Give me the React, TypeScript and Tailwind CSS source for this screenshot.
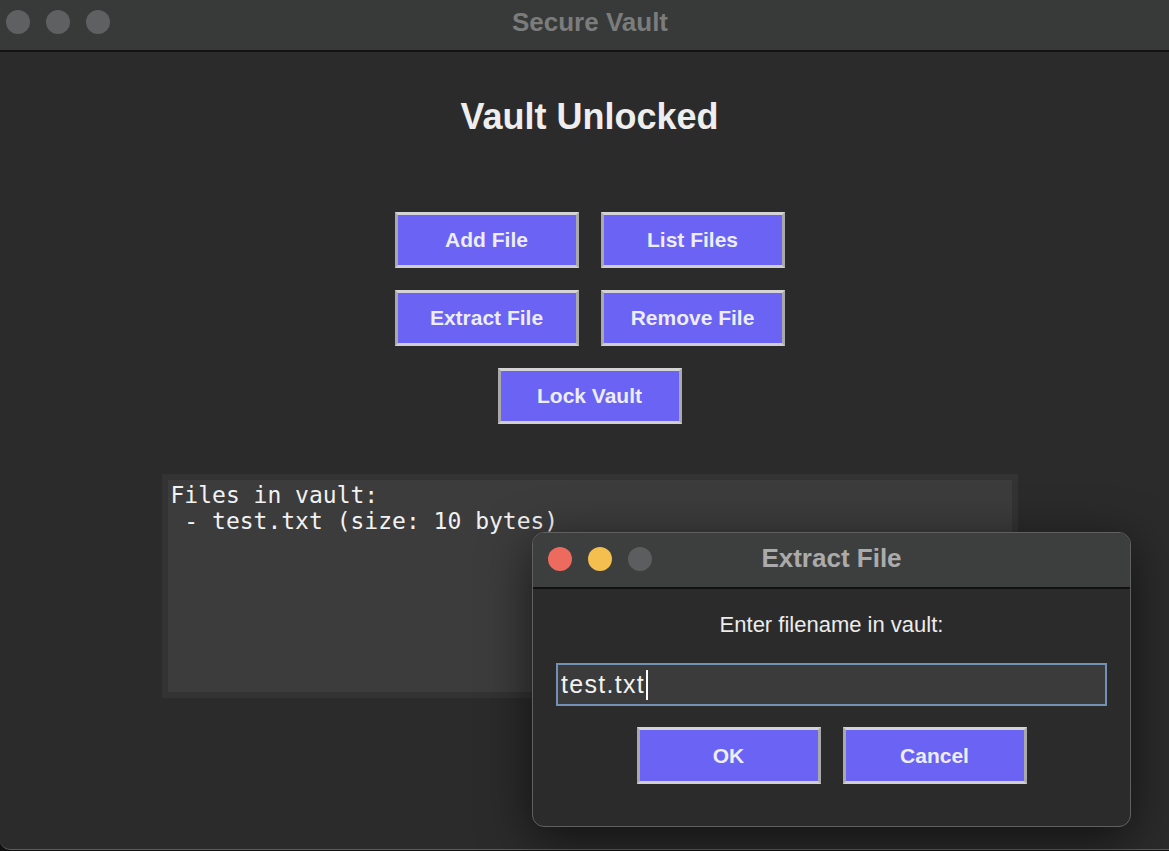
import React from "react";

const btn =
  "w-[184px] h-[56px] bg-[#6a63f4] text-[#ededf7] text-[21px] font-bold border-[3px] border-t-[#d4d4d4] border-l-[#a9a9a9] border-r-[#a9a9a9] border-b-[#cfcfcf] flex items-center justify-center";

function Lights({ colors, size }: { colors: string[]; size: string }) {
  return (
    <div className="flex gap-[16px]">
      {colors.map((c, i) => (
        <span key={i} className={`${size} rounded-full ${c}`} />
      ))}
    </div>
  );
}

export default function App() {
  return (
    <div
      className="relative w-[1169px] h-[851px] overflow-hidden bg-[#111111]"
      style={{ fontFamily: '"Liberation Sans", Arial, sans-serif' }}>
      <div className="h-[850px] flex flex-col bg-[#2b2b2b] rounded-bl-[10px] border-b border-[#5c5c5c]">
        {/* title bar */}
        <div className="relative h-[52px] bg-[#383a39] border-b-2 border-[#121212] flex items-center px-[6px] pb-[6px]">
          <Lights
            size="w-[24px] h-[24px]"
            colors={["bg-[#5f6061]", "bg-[#5f6061]", "bg-[#5f6061]"]}
          />
          <div className="absolute inset-0 flex items-center justify-center pl-[11px] pb-[6px] text-[26px] font-bold text-[#7b7c7c]">
            Secure Vault
          </div>
        </div>

        <main className="flex flex-col items-center pl-[10px]">
          <h1 className="mt-[45px] text-[36px] leading-[40px] font-bold text-[#eeeeee]">
            Vault Unlocked
          </h1>

          <div className="mt-[75px] grid grid-cols-2 gap-[22px]">
            <button className={btn}>Add File</button>
            <button className={btn}>List Files</button>
            <button className={btn}>Extract File</button>
            <button className={btn}>Remove File</button>
          </div>
          <button className={`${btn} mt-[22px]`}>Lock Vault</button>

          <div
            className="mt-[50px] w-[856px] h-[224px] border-[6px] border-[#333333] bg-[#3c3c3c] pl-[3px] pt-[2px] text-[23px] leading-[26px] text-[#f2f2f2] whitespace-pre"
            style={{ fontFamily: '"DejaVu Sans Mono", Menlo, monospace' }}>
            {"Files in vault:\n - test.txt (size: 10 bytes)"}
          </div>
        </main>
      </div>

      {/* dialog */}
      <div className="absolute left-[532px] top-[532px] w-[599px] h-[295px] rounded-[12px] border border-[#606060] bg-[#2b2b2b] overflow-hidden shadow-[0_12px_50px_rgba(0,0,0,0.6)] flex flex-col">
        <div className="relative h-[56px] bg-[#3d3f3e] border-b-2 border-[#111111] flex items-center px-[15px] pb-[2px]">
          <Lights
            size="w-[24px] h-[24px]"
            colors={["bg-[#ec6a5e]", "bg-[#f4bf4f]", "bg-[#5c5d5e]"]}
          />
          <div className="absolute inset-0 flex items-center justify-center pb-[4px] text-[26px] font-bold text-[#ababab]">
            Extract File
          </div>
        </div>
        <div className="flex flex-col items-center px-[23px]">
          <p className="mt-[23px] text-[22px] leading-[26px] text-[#ececec]">
            Enter filename in vault:
          </p>
          <div className="mt-[25px] w-full h-[43px] border-2 border-[#7191b6] bg-[#3b3b3b] flex items-center pl-[3px]">
            <span className="text-[25px] tracking-[1.3px] text-[#f2f2f2]">test.txt</span>
            <span className="ml-[1px] w-[2px] h-[30px] bg-white" />
          </div>
          <div className="mt-[21px] flex gap-[22px]">
            <button className={`${btn} h-[57px]`}>OK</button>
            <button className={`${btn} h-[57px]`}>Cancel</button>
          </div>
        </div>
      </div>
    </div>
  );
}
